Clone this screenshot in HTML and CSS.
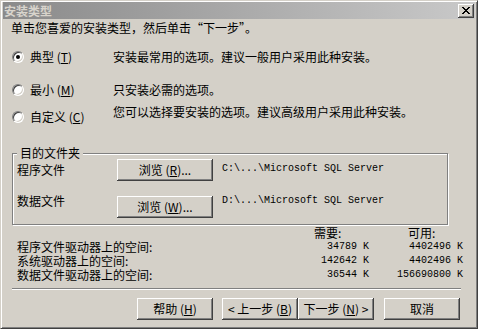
FILE: index.html
```html
<!DOCTYPE html>
<html lang="zh-CN">
<head>
<meta charset="utf-8">
<title>安装类型</title>
<link rel="stylesheet" href="styles.css">
</head>
<body>
<div class="window">
  <div class="titlebar">
    <span class="title">安装类型</span>
    <span class="close"><svg width="8" height="7" viewBox="0 0 8 7" shape-rendering="crispEdges"><path fill="#000" d="M0 0h2v1H0z M6 0h2v1H6z M1 1h2v1H1z M5 1h2v1H5z M2 2h4v1H2z M3 3h2v1H3z M2 4h4v1H2z M1 5h2v1H1z M5 5h2v1H5z M0 6h2v1H0z M6 6h2v1H6z"/></svg></span>
  </div>
  <div class="content">
    <p class="intro">单击您喜爱的安装类型，然后单击“下一步”。</p>
    <div class="options">
      <div class="opt">
        <span class="radio checked"></span>
        <span class="opt-label">典型 (<u>T</u>)</span>
        <span class="opt-desc">安装最常用的选项。建议一般用户采用此种安装。</span>
      </div>
      <div class="opt opt2">
        <span class="radio"></span>
        <span class="opt-label">最小 (<u>M</u>)</span>
        <span class="opt-desc">只安装必需的选项。</span>
      </div>
      <div class="opt opt3">
        <span class="radio"></span>
        <span class="opt-label">自定义 (<u>C</u>)</span>
        <span class="opt-desc">您可以选择要安装的选项。建议高级用户采用此种安装。</span>
      </div>
    </div>
    <div class="group">
      <span class="legend">目的文件夹</span>
      <div class="dest-row">
        <span class="dest-label">程序文件</span>
        <button class="btn btn-browse">浏览 (<u>R</u>)...</button>
        <span class="path">C:\...\Microsoft SQL Server</span>
      </div>
      <div class="dest-row dest-row2">
        <span class="dest-label">数据文件</span>
        <button class="btn btn-browse">浏览 (<u>W</u>)...</button>
        <span class="path">D:\...\Microsoft SQL Server</span>
      </div>
    </div>
    <div class="space">
      <span></span><span class="head head-need">需要:</span><span class="head head-avail">可用:</span>
      <span>程序文件驱动器上的空间:</span><span class="num">34789 K</span><span class="num">4402496 K</span>
      <span>系统驱动器上的空间:</span><span class="num">142642 K</span><span class="num">4402496 K</span>
      <span>数据文件驱动器上的空间:</span><span class="num">36544 K</span><span class="num">156690800 K</span>
    </div>
    <div class="sep"></div>
    <div class="buttons">
      <button class="btn btn-nav">帮助 (<u>H</u>)</button>
      <button class="btn btn-nav btn-back">&lt; 上一步 (<u>B</u>)</button>
      <button class="btn btn-nav">下一步 (<u>N</u>) &gt;</button>
      <button class="btn btn-nav btn-cancel">取消</button>
    </div>
  </div>
</div>
</body>
</html>
```
FILE: styles.css
```css
* { box-sizing: border-box; }
html, body { margin: 0; padding: 0; }
body {
  width: 478px;
  height: 329px;
  overflow: hidden;
  background: #d4d0c8;
  font-family: "Noto Sans CJK SC", "Noto Sans", sans-serif;
  font-size: 12px;
  color: #000;
}
.window {
  width: 478px;
  height: 329px;
  background: #d4d0c8;
  border: 1px solid;
  border-color: #d4d0c8 #404040 #404040 #d4d0c8;
  box-shadow: inset 1px 1px #fff, inset -1px -1px #808080;
  padding: 1px 2px 2px 2px;
  display: flex;
  flex-direction: column;
}
.titlebar {
  height: 17px;
  display: flex;
  align-items: center;
  padding-left: 1px;
  background: linear-gradient(to right, #8a8a8a, #c9c9c9);
}
.title {
  color: #d8d4cc;
  font-weight: bold;
  line-height: 14px;
}
.close {
  margin-left: auto;
  margin-right: 1px;
  width: 16px;
  height: 14px;
  background: #d4d0c8;
  box-shadow: inset -1px -1px #404040, inset 1px 1px #fff, inset -2px -2px #808080;
  display: flex;
  align-items: center;
  justify-content: center;
  padding: 0 0 1px 0;
}
.close svg { display: block; }
.content {
  padding-left: 9px;
  display: flex;
  flex-direction: column;
}
.intro {
  margin: 2px 0 0 -1px;
  line-height: 14px;
}
.options { margin-top: 14px; }
.opt {
  display: flex;
  align-items: flex-start;
  height: 16px;
  line-height: 16px;
}
.opt2 { margin-top: 17px; }
.opt3 { margin-top: 11px; }
.opt3 .opt-desc { margin-top: -5px; }
.radio {
  position: relative;
  width: 12px;
  height: 12px;
  margin-top: 2px;
  margin-right: 6px;
  border-radius: 50%;
  background: #fff;
  border: 1px solid;
  border-color: #808080 #fff #fff #808080;
  box-shadow: inset 1px 1px #404040, inset -1px -1px #d4d0c8;
  flex: none;
}
.radio.checked::after {
  content: "";
  position: absolute;
  left: 3px;
  top: 3px;
  width: 4px;
  height: 4px;
  border-radius: 50%;
  background: #000;
}
.opt-label { width: 83px; flex: none; }
.opt-desc { white-space: nowrap; }
.group {
  position: relative;
  width: 436px;
  margin-top: 28px;
  border: 1px solid #808080;
  box-shadow: inset 1px 1px #fff, 1px 1px #fff;
  padding: 5px 0 6px 4px;
}
.legend {
  position: absolute;
  top: -8px;
  left: 4px;
  padding: 0 3px;
  background: #d4d0c8;
  line-height: 14px;
}
.dest-row {
  display: flex;
  align-items: flex-start;
}
.dest-row2 { margin-top: 10px; }
.dest-label {
  width: 100px;
  line-height: 14px;
  margin-top: 4px;
}
.dest-row2 .dest-label { margin-top: 3px; }
.btn {
  background: #d4d0c8;
  border: 0;
  padding: 0;
  margin: 0;
  font: inherit;
  color: #000;
  line-height: 14px;
  box-shadow: inset -1px -1px #404040, inset 1px 1px #fff, inset -2px -2px #808080;
  display: flex;
  align-items: center;
  justify-content: center;
  white-space: nowrap;
}
.btn-browse { width: 96px; height: 22px; }
.dest-row2 .btn-browse { margin-top: 5px; }
.path {
  margin-left: 9px;
  margin-top: 3px;
  font-family: "Liberation Mono", monospace;
  font-size: 10px;
  line-height: 14px;
  white-space: nowrap;
}
.space {
  display: grid;
  grid-template-columns: 283px 69px 94px;
  line-height: 14px;
  margin-top: 1px;
  padding-left: 5px;
}
.head-need { padding-left: 14px; }
.head-avail { padding-left: 39px; }
.num {
  text-align: right;
  font-family: "Liberation Mono", monospace;
  font-size: 10px;
}
.sep {
  width: 449px;
  height: 2px;
  margin-top: 6px;
  border-top: 1px solid #808080;
  border-bottom: 1px solid #fff;
}
.buttons {
  display: flex;
  margin-top: 8px;
  padding-left: 125px;
}
.btn-nav { width: 76px; height: 22px; }
.btn-back { margin-left: 9px; }
.btn-cancel { margin-left: 10px; }
```
